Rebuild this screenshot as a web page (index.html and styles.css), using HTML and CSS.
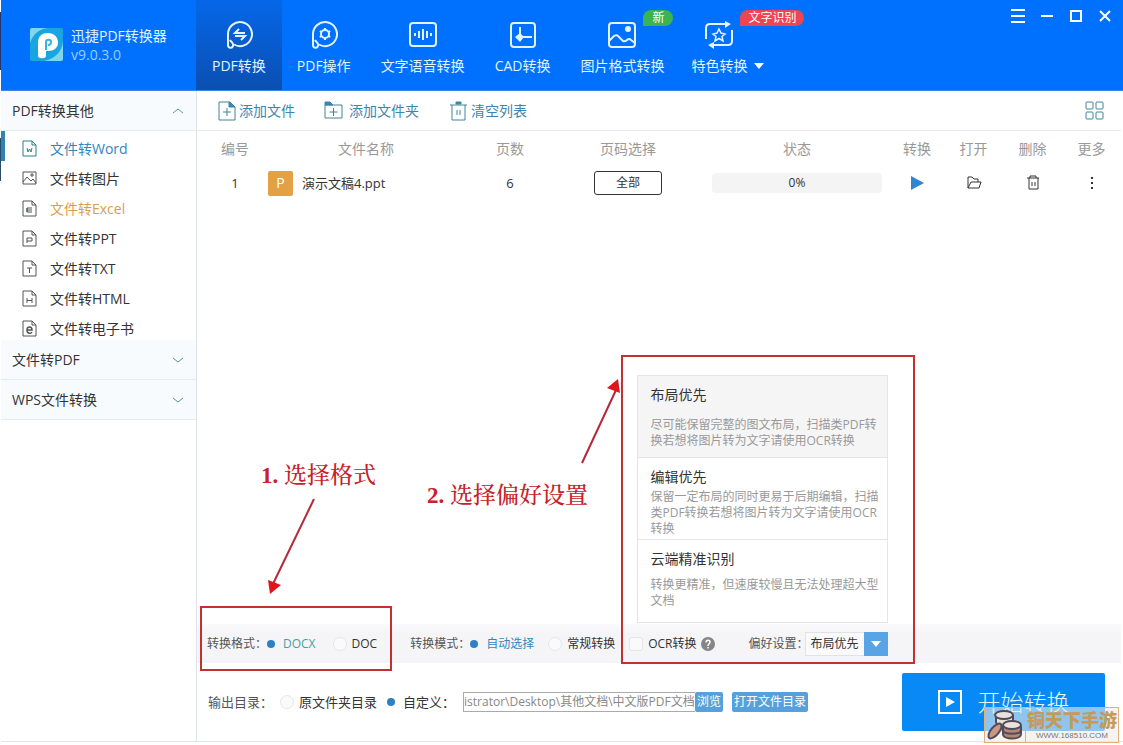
FILE: index.html
```html
<!DOCTYPE html>
<html lang="zh-CN">
<head>
<meta charset="utf-8">
<title>迅捷PDF转换器</title>
<link rel="stylesheet" href="styles.css">
</head>
<body>
<div class="app">
  <header class="topbar">
    <div class="brand">
      <svg class="logo" viewBox="0 0 33 33" aria-hidden="true">
        <rect width="33" height="33" rx="2" fill="#19a5e2"/>
        <path d="M0 15C3 6 9 1 18 0H2Q0 0 0 2zM33 14C32 23 25 31 14 33h17q2 0 2-2z" fill="#7fd6ee"/>
        <path d="M8 28V15C8 8 12 5 18 5c6 0 10 4 10 9.500S24 23 18 23h-2v5c0 3-8 3-8 0z" fill="#fff"/>
        <path d="M16 22v-8c0-3 5-3 5 0 0 2-1 3-3 3" fill="none" stroke="#35b4e4" stroke-width="2"/>
      </svg>
      <div class="brand-text"><strong>迅捷PDF转换器</strong><span>v9.0.3.0</span></div>
    </div>
    <nav class="tabs" aria-label="功能">
      <button class="tab tab-active">
        <svg class="tab-icon" viewBox="0 0 28 28"><path d="M3 24V13A12 12 0 1 1 9 23.500M3 24c0 3 4 4 5 1s-2-4-3-6"/><path d="M20 12H10l4-4M10 15h10l-4 4"/></svg>
        <span>PDF转换</span>
      </button>
      <button class="tab">
        <svg class="tab-icon" viewBox="0 0 28 28"><path d="M3 24V13A12 12 0 1 1 9 23.500M3 24c0 3 4 4 5 1s-2-4-3-6"/><circle cx="15" cy="13" r="4"/><path d="M15 7v2M15 17v2M9.800 10l1.700 1M18.500 15l1.700 1M9.800 16l1.700-1M18.500 11l1.700-1"/></svg>
        <span>PDF操作</span>
      </button>
      <button class="tab">
        <svg class="tab-icon" viewBox="0 0 28 28"><rect x="1" y="2" width="26" height="23" rx="3"/><path d="M6 12v3M10 10v7M14 8v11M18 10v7M22 12v3"/></svg>
        <span>文字语音转换</span>
      </button>
      <button class="tab">
        <svg class="tab-icon" viewBox="0 0 28 28"><rect x="2" y="2" width="24" height="24" rx="3"/><path d="M11 6v10h12"/><path d="M11 12l4 4-4 5-5-5z" fill="currentColor" stroke="none"/></svg>
        <span>CAD转换</span>
      </button>
      <button class="tab">
        <svg class="tab-icon" viewBox="0 0 28 28"><rect x="1" y="2" width="26" height="24" rx="3"/><path d="M1 20l5-5q3-2 5 1l4 4q2 1 4-1 2-2 4 0l4 3"/><circle cx="20" cy="8" r="2" fill="currentColor"/></svg>
        <span>图片格式转换</span>
        <em class="badge badge-new">新</em>
      </button>
      <button class="tab tab-more">
        <svg class="tab-icon" viewBox="0 0 28 28"><path d="M1 18V7q0-4 4-4h16M27 9v11q0 4-4 4H8"/><path d="M20 0l6 3-6 4zM9 21l-6 3 6 4z" fill="currentColor" stroke="none"/><path d="M14 8l2 4 4 1-3 2.500 1 4.500-4-2.500L10 20l1-4.500L8 13l4-1z" stroke-width="1.500"/></svg>
        <span>特色转换</span>
        <svg class="tab-caret" viewBox="0 0 10 6"><path d="M0 0h10L5 6z"/></svg>
        <em class="badge badge-ocr">文字识别</em>
      </button>
    </nav>
    <div class="window-controls">
      <button aria-label="菜单"><svg viewBox="0 0 14 14"><path d="M0 1h14M0 7h14M0 13h14"/></svg></button>
      <button aria-label="最小化"><svg viewBox="0 0 14 14"><path d="M1 7h12"/></svg></button>
      <button aria-label="最大化"><svg viewBox="0 0 14 14"><rect x="2" y="2" width="10" height="10"/></svg></button>
      <button aria-label="关闭"><svg viewBox="0 0 14 14"><path d="M2 2l10 10M12 2L2 12"/></svg></button>
    </div>
  </header>

  <div class="body">
    <aside class="sidebar">
      <button class="group">PDF转换其他<svg viewBox="0 0 12 8"><path d="M1 6l5-4 5 4"/></svg></button>
      <ul class="formats">
        <li><a href="#word" class="format format-current"><svg viewBox="0 0 16 18"><path d="M2 1h9l4 4v11H2zM11 1v4h4M6 8l1 4 1.500-3 1.500 3 1-4"/></svg>文件转Word</a></li>
        <li><a href="#image" class="format"><svg viewBox="0 0 16 18"><path d="M2 2h13v12H2zM2 12l4-5 4 4 2-2 3 4M10 4h2v2h-2z"/></svg>文件转图片</a></li>
        <li><a href="#excel" class="format format-hover"><svg viewBox="0 0 16 18"><path d="M2 1h9l4 4v11H2zM11 1v4h4M11 8H6v4h5M6 10h5M6 8v4"/></svg>文件转Excel</a></li>
        <li><a href="#ppt" class="format"><svg viewBox="0 0 16 18"><path d="M2 1h9l4 4v11H2zM11 1v4h4M6 13V8h5v3H6"/></svg>文件转PPT</a></li>
        <li><a href="#txt" class="format"><svg viewBox="0 0 16 18"><path d="M2 1h9l4 4v11H2zM11 1v4h4M6 8h5M8.500 8v5"/></svg>文件转TXT</a></li>
        <li><a href="#html" class="format"><svg viewBox="0 0 16 18"><path d="M2 1h9l4 4v11H2zM11 1v4h4M6 8v5M11 8v5M6 10.500h5"/></svg>文件转HTML</a></li>
        <li><a href="#ebook" class="format"><svg viewBox="0 0 16 18"><path d="M2 1h9l4 4v11H2zM11 1v4h4"/><path d="M6 10h5c0-4-5-4-5 0s4 4 5 2" stroke-width="1.500"/></svg>文件转电子书</a></li>
      </ul>
      <button class="group">文件转PDF<svg viewBox="0 0 12 8"><path d="M1 2l5 4 5-4"/></svg></button>
      <button class="group">WPS文件转换<svg viewBox="0 0 12 8"><path d="M1 2l5 4 5-4"/></svg></button>
    </aside>

    <main class="content">
      <div class="toolbar">
        <button class="tool tool-file"><svg viewBox="0 0 18 20"><path d="M1 1h11l5 5v13H1zM9 7v8M5 11h8"/><path d="M11 1l6 5h-6z" fill="#2f8ac4"/></svg>添加文件</button>
        <button class="tool tool-folder"><svg viewBox="0 0 20 20"><path d="M1 4h17v13H1zM9.500 7v8M5.500 11h8"/><path d="M1 1h5l3 3H1z" fill="#2f8ac4"/></svg>添加文件夹</button>
        <button class="tool tool-clear"><svg viewBox="0 0 18 20"><path d="M0 4h17M2 4v15h13V4M7 9v5M10 9v5"/><path d="M6 1h5v2H6z" fill="#2f8ac4"/></svg>清空列表</button>
        <button class="tool tool-view" aria-label="视图"><svg viewBox="0 0 20 20"><rect x="1" y="1" width="7" height="7" rx="1"/><rect x="11" y="1" width="7" height="7" rx="1"/><rect x="1" y="11" width="7" height="7" rx="1"/><rect x="11" y="11" width="7" height="7" rx="1"/></svg></button>
      </div>

      <div class="table-wrap">
        <table class="files">
          <colgroup><col class="c-no"><col class="c-name"><col class="c-pages"><col class="c-range"><col class="c-state"><col class="c-run"><col class="c-act"><col class="c-act"><col class="c-act"></colgroup>
          <thead><tr><th>编号</th><th>文件名称</th><th>页数</th><th>页码选择</th><th>状态</th><th>转换</th><th>打开</th><th>删除</th><th>更多</th></tr></thead>
          <tbody>
            <tr>
              <td>1</td>
              <td><div class="file"><i>P</i>演示文稿4.ppt</div></td>
              <td>6</td>
              <td><button class="range">全部</button></td>
              <td><div class="progress" role="progressbar" aria-valuenow="0" aria-label="进度">0%</div></td>
              <td><button class="act" aria-label="转换"><svg viewBox="0 0 16 16"><path d="M2 1l13 7-13 7z" fill="#2f86d0" stroke="none"/></svg></button></td>
              <td><button class="act" aria-label="打开"><svg viewBox="0 0 16 16"><path d="M2 13V2h4l2 2h4v3M2 13l3-6h10l-2 6z"/></svg></button></td>
              <td><button class="act" aria-label="删除"><svg viewBox="0 0 16 16"><path d="M2 3h12M5 3V1h6v2M4 3v11h9V3M7 7v4M10 7v4"/></svg></button></td>
              <td><button class="act" aria-label="更多"><svg viewBox="0 0 16 16"><path d="M8 2v2M8 7v2M8 12v2" stroke-width="2"/></svg></button></td>
            </tr>
          </tbody>
        </table>
      </div>

      <div class="options">
        <div class="choices choices-format" role="group" aria-labelledby="cap-format">
          <span class="caption" id="cap-format">转换格式：</span>
          <label class="choice choice-teal"><input type="radio" name="format" checked>DOCX</label>
          <label class="choice"><input type="radio" name="format">DOC</label>
        </div>
        <div class="choices" role="group" aria-labelledby="cap-mode">
          <span class="caption" id="cap-mode">转换模式：</span>
          <label class="choice choice-blue"><input type="radio" name="mode" checked>自动选择</label>
          <label class="choice"><input type="radio" name="mode">常规转换</label>
          <label class="choice"><input type="checkbox">OCR转换<svg class="help" viewBox="0 0 14 14"><circle cx="7" cy="7" r="7" fill="#858585"/><path d="M5 5.500c0-3 4-3 4-.5C9 7 7 6.500 7 9M7 10v1.500" fill="none" stroke="#fff" stroke-width="1.500"/></svg></label>
        </div>
        <div class="preference">
          <label class="caption" for="pref">偏好设置：</label>
          <div class="select">
            <select id="pref"><option>布局优先</option><option>编辑优先</option><option>云端精准识别</option></select>
            <span class="select-arrow"><svg viewBox="0 0 10 6"><path d="M0 0h10L5 6z"/></svg></span>
          </div>
          <ul class="menu">
            <li class="menu-item menu-on"><h3>布局优先</h3><p>尽可能保留完整的图文布局，扫描类PDF转<br>换若想将图片转为文字请使用OCR转换</p></li>
            <li class="menu-item menu-tight"><h3>编辑优先</h3><p>保留一定布局的同时更易于后期编辑，扫描<br>类PDF转换若想将图片转为文字请使用OCR<br>转换</p></li>
            <li class="menu-item menu-cloud"><h3>云端精准识别</h3><p>转换更精准，但速度较慢且无法处理超大型<br>文档</p></li>
          </ul>
        </div>
      </div>

      <footer class="output">
        <span class="output-caption">输出目录：</span>
        <label class="choice"><input type="radio" name="dir">原文件夹目录</label>
        <label class="choice"><input type="radio" name="dir" checked>自定义：</label>
        <div class="path"><input type="text" aria-label="输出目录" value="istrator\Desktop\其他文档\中文版PDF文档"><button class="small">浏览</button></div>
        <button class="small small-open">打开文件目录</button>
        <button class="start"><svg viewBox="0 0 24 24"><rect x="1" y="1" width="22" height="22" fill="none" stroke="#fff" stroke-width="2"/><path d="M8 7l9 5-9 5z" fill="#fff"/></svg>开始转换</button>
      </footer>
    </main>
  </div>

  <div class="mark mark-format"></div>
  <div class="mark mark-pref"></div>
  <p class="note note-format"><b>1.</b> 选择格式</p>
  <p class="note note-pref"><b>2.</b> 选择偏好设置</p>
  <svg class="arrow arrow-format" viewBox="0 0 54 100"><path d="M50 1L8 88" fill="none" stroke="#b5283a" stroke-width="2"/><path d="M4 82l13 5L6 96z" fill="#e0141c"/></svg>
  <svg class="arrow arrow-pref" viewBox="0 0 44 88"><path d="M3 85L37 12" fill="none" stroke="#b5283a" stroke-width="2"/><path d="M39 1l2 14-13-5z" fill="#e0141c"/></svg>

  <div class="watermark">
    <svg viewBox="0 0 40 34"><g fill="#e9e2dc" stroke="#514a58" stroke-width="2"><path d="M11 7v7c0 5 17 5 17 0V7"/><ellipse cx="19" cy="7" rx="9" ry="4"/><path d="M18 18v8c0 6 18 6 18 0v-8" fill="#b88675"/><path d="M18 22c0 5 18 5 18 0" fill="none"/><ellipse cx="27" cy="17" rx="9" ry="4"/><ellipse cx="10" cy="23" rx="4" ry="9" transform="rotate(40 10 23)" fill="#c99680"/></g></svg>
    <div><b>铜天下手游</b><small>WWW.168510.COM</small></div>
  </div>
</div>
</body>
</html>
```
FILE: styles.css
```css
* { box-sizing: border-box; }
body {
  margin: 0;
  color: #333;
  background: #fff;
  font: 14px/20px "Open Sans", "Noto Sans CJK SC", sans-serif;
}
button {
  margin: 0;
  padding: 0;
  border: 0;
  background: none;
  color: inherit;
  font: inherit;
  white-space: nowrap;
}
svg { flex: none; }
h3, p, ul { margin: 0; padding: 0; }
ul { list-style: none; }
a { color: inherit; text-decoration: none; }

.app {
  position: relative;
  display: flex;
  flex-direction: column;
  min-height: 100vh;
  padding: 0 0 3px 1px;
  background: linear-gradient(#fff 12px, #24356b 12px 70px, #fff 70px 138px, #2c4a6c 138px 181px, #fff 181px) 0 0 / 1px 100% no-repeat;
}

/* header */
.topbar {
  display: flex;
  height: 91px;
  background: #0070ff;
  border-bottom: 1px solid #3a86e0;
  color: #e2f4ff;
}
.brand { display: flex; gap: 8px; width: 195px; padding: 28px 0 0 29px; }
.logo { width: 33px; height: 33px; }
.brand-text { display: flex; flex-direction: column; margin-top: -2px; }
.brand-text strong { font-weight: 400; }
.brand-text span { color: #9cceff; line-height: 18px; }
.tabs { display: flex; }
.tab {
  position: relative;
  display: grid;
  justify-items: center;
  align-content: start;
  gap: 7px;
  padding: 21px 15px 0;
}
.tab-active { padding: 21px 16px 0; background: linear-gradient(#0567e8, #0b4fb2); }
.tab-icon { width: 28px; height: 28px; fill: none; stroke: currentColor; stroke-width: 2; }
.tab-more { grid-template-columns: auto 10px; column-gap: 7px; padding-left: 12px; }
.tab-more > span { grid-row: 2; }
.tab-caret { grid-row: 2; grid-column: 2; align-self: center; width: 10px; height: 6px; fill: #fff; }
.badge {
  position: absolute;
  top: 10px;
  padding: 0 8px;
  border-radius: 8px 8px 8px 0;
  color: #fff;
  font-size: 12px;
  font-style: normal;
  line-height: 16px;
}
.badge-new { left: 78px; padding: 0 9px; background: #3cb353; }
.badge-ocr { left: 61px; background: #ef4451; }
.window-controls { display: flex; gap: 15px; margin-left: auto; padding: 9px 11px 0 0; align-self: flex-start; }
.window-controls svg { display: block; width: 14px; height: 14px; fill: none; stroke: #fff; stroke-width: 2; }

/* sidebar */
.body { display: flex; flex: 1; border-bottom: 1px solid #e3e6ec; }
.sidebar { flex: none; width: 196px; border-right: 1px solid #dfe4ec; }
.group {
  position: relative;
  display: flex;
  align-items: center;
  justify-content: space-between;
  width: 100%;
  height: 40px;
  padding: 0 12px 0 11px;
  background: #f8fbfe;
  border-bottom: 1px solid #e4ebf0;
}
.group svg { width: 12px; height: 8px; fill: none; stroke: #5f93a5; }
.formats { padding-top: 3px; margin-bottom: -4px; }
.format { position: relative; display: flex; align-items: center; gap: 13px; height: 30px; padding-left: 20px; }
.format svg { width: 16px; height: 18px; fill: none; stroke: #505456; }
.format-current { color: #3187bd; }
.format-current svg { stroke: #2b7e84; }
.format-current::before { content: ""; position: absolute; left: 0; top: -3px; width: 4px; height: 30px; background: #2f83ad; }
.format-hover { color: #d9a04c; }

/* toolbar */
.content { display: flex; flex: 1; flex-direction: column; min-width: 0; padding-right: 2px; }
.toolbar { display: flex; align-items: center; height: 40px; padding: 0 16px 0 21px; border-bottom: 1px solid #e6e9ee; color: #3b86ae; }
.tool { display: flex; align-items: center; gap: 3px; }
.tool svg { width: 18px; height: 20px; fill: none; stroke: #3e8499; }
.tool-folder { gap: 5px; margin-left: 29px; }
.tool-folder svg { width: 20px; }
.tool-clear { margin-left: 31px; }
.tool-view { margin-left: auto; }
.tool-view svg { width: 20px; }

/* file table */
.table-wrap { flex: 1; padding-left: 9px; }
.files { width: 100%; table-layout: fixed; border-collapse: collapse; }
.files th { height: 36px; padding: 0; color: #999; font-weight: 400; }
.files td { height: 32px; padding: 0; text-align: center; font-size: 13px; }
.c-no { width: 58px; }
.c-name { width: 204px; }
.c-pages { width: 84px; }
.c-range { width: 152px; }
.c-state { width: 186px; }
.c-run { width: 54px; }
.c-act { width: 59px; }
.file { display: flex; align-items: center; gap: 9px; padding-left: 4px; }
.file i { width: 25px; height: 25px; border-radius: 2px; background: #e3a143; color: #fff; font-size: 14px; font-style: normal; line-height: 24px; }
.range { width: 68px; height: 24px; border: 1px solid #333; border-radius: 3px; background: #fff; font-size: 12px; line-height: 20px; }
.progress { margin: 0 8px; border-radius: 4px; background: #f4f4f4; font-size: 12px; line-height: 20px; }
.act { display: block; margin: 0 auto; }
.act svg { display: block; width: 16px; height: 16px; fill: none; stroke: #333; }

/* conversion options */
.options { display: flex; align-items: center; gap: 33px; height: 39px; padding-left: 10px; background: linear-gradient(#fafafb, #f5f5f7 10px); font-size: 12px; }
.choices { display: flex; align-items: center; gap: 14px; }
.caption { flex: none; width: 57px; white-space: nowrap; color: #555; }
.choices .caption { margin-right: -14px; }
.choices-format .choice + .choice { margin-left: 3px; }
.choice { display: flex; align-items: center; gap: 5px; white-space: nowrap; }
.choice-teal { color: #4a9da3; }
.choice-blue { color: #3187bd; }
.choice input { appearance: none; width: 14px; height: 14px; margin: 0; border: 1px solid #e4e6e8; border-radius: 50%; background: #fafafa; }
.choice input[type="checkbox"] { border-radius: 3px; }
.choice input:checked { border: 3px solid transparent; background: #2f7fc4; background-clip: padding-box; }
.help { width: 14px; height: 14px; }
.preference { position: relative; display: flex; align-items: center; }
.select { display: flex; width: 83px; height: 24px; border: 1px solid #e0e3e6; background: #fafafa; }
.select select { flex: 1; min-width: 0; appearance: none; padding: 0 0 0 4px; border: 0; background: none; color: #333; font: inherit; }
.select-arrow { display: grid; place-items: center; width: 24px; margin: -1px; background: #58a4e4; }
.select-arrow svg { width: 10px; height: 6px; fill: #fff; }
.menu { position: absolute; right: 0; bottom: 33px; width: 251px; border: 1px solid #e3e5e8; background: #fff; }
.menu-item { height: 82px; padding: 9px 0 0 12px; border-bottom: 1px solid #e3e5e8; }
.menu-item:last-child { border-bottom: 0; }
.menu-on { background: #f5f5f6; }
.menu h3 { font-size: 14px; font-weight: 400; line-height: 20px; }
.menu p { margin-top: 12px; color: #999; font-size: 12px; line-height: 16px; white-space: nowrap; }
.menu-tight p { margin-top: 2px; }
.menu-cloud p { margin-top: 8px; }

/* output */
.output { display: flex; align-items: center; height: 78px; padding: 0 16px 0 11px; font-size: 13px; }
.output-caption { width: 72px; color: #555; }
.output .choice + .choice { margin-left: 7px; }
.path { display: flex; width: 260px; height: 20px; margin-left: 8px; }
.path input { flex: 1; min-width: 0; padding: 0; border: 1px solid #aaa; border-right: 0; background: #fff; color: #888; font: inherit; font-size: 12px; }
.small { height: 20px; padding: 0 2px; border-radius: 2px; background: #56a0dd; color: #fff; font-size: 12px; line-height: 20px; }
.small-open { margin-left: 9px; }
.start { display: flex; align-items: center; justify-content: center; gap: 16px; width: 203px; height: 58px; margin-left: auto; border-radius: 2px; background: #078af6; color: #e4f7ff; font-size: 23px; font-weight: 300; }
.start svg { width: 24px; height: 24px; }

/* tutorial annotations */
.mark { position: absolute; border: 2px solid #c23030; }
.mark-format { left: 200px; top: 606px; width: 192px; height: 65px; }
.mark-pref { left: 621px; top: 355px; width: 294px; height: 309px; }
.note { position: absolute; color: #c9202a; font: 500 23px/28px "Liberation Serif", "Noto Serif CJK SC", "Noto Sans CJK SC", serif; white-space: nowrap; }
.note-format { left: 261px; top: 462px; }
.note-pref { left: 427px; top: 482px; }
.arrow { position: absolute; }
.arrow-format { left: 264px; top: 498px; width: 54px; height: 100px; }
.arrow-pref { left: 579px; top: 378px; width: 44px; height: 88px; }

.watermark { position: absolute; right: 4px; bottom: 2px; display: flex; width: 135px; height: 36px; border: 1px solid #e5b078; background: rgba(235, 235, 235, .6); }
.watermark svg { width: 40px; height: 34px; }
.watermark div { display: flex; flex: 1; flex-direction: column; align-items: center; border-left: 1px solid #e5b078; }
.watermark b { color: #c49a5c; font-size: 18px; font-weight: 900; line-height: 24px; white-space: nowrap; }
.watermark small { color: #777; font: 8px/8px "Liberation Sans", sans-serif; }
```
